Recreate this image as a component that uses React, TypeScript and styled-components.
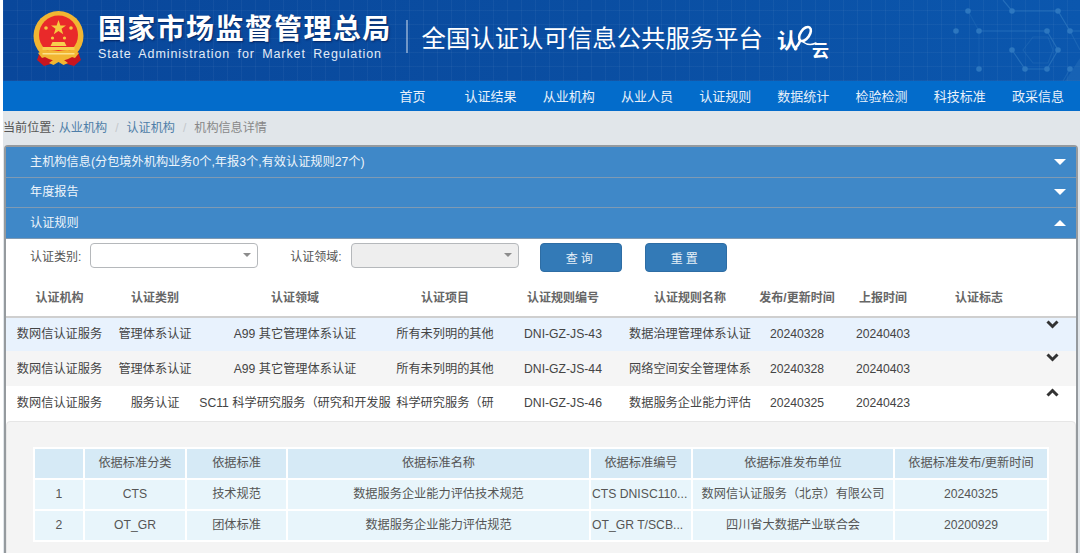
import styled, { createGlobalStyle } from "styled-components";

const GlobalStyle = createGlobalStyle`
  html, body {
    margin: 0;
    padding: 0;
    background: #fff;
    font-family: "Liberation Sans", "Noto Sans CJK SC", sans-serif;
    overflow: hidden;
  }
`;

const Page = styled.div`
  width: 1077px;
  height: 553px;
  margin-left: 3px;
  overflow: hidden;
  background: #e1e6ea;
`;

const Header = styled.header`
  position: relative;
  height: 81px;
  display: flex;
  align-items: center;
  padding-left: 29px;
  box-sizing: border-box;
  overflow: hidden;
  background-color: #0a4c9f;
  background-image: repeating-linear-gradient(90deg, rgba(255, 255, 255, 0.04) 0 1px, transparent 1px 14px),
    repeating-linear-gradient(0deg, rgba(255, 255, 255, 0.04) 0 1px, transparent 1px 14px),
    linear-gradient(90deg, #09479b 0%, #0a4ea2 55%, #0b57ae 100%);
`;

const Emblem = styled.svg`
  width: 54px;
  height: 56px;
  flex: none;
  margin-top: -3px;
`;

const Brand = styled.div`
  margin-left: 12px;
  color: #fff;
  margin-top: -6px;
`;

const BrandCn = styled.div`
  font-size: 28px;
  line-height: 33px;
  font-weight: 700;
  letter-spacing: 1.35px;
  white-space: nowrap;
  text-shadow: 1px 1px 2px rgba(0, 20, 70, 0.7);
`;

const BrandEn = styled.div`
  font-size: 12.5px;
  line-height: 16px;
  letter-spacing: 0.9px;
  word-spacing: 3px;
  white-space: nowrap;
  color: #e3ecf7;
`;

const Divider = styled.div`
  width: 2px;
  height: 33px;
  margin-left: 14px;
  margin-top: -8px;
  background: rgba(255, 255, 255, 0.42);
`;

const Platform = styled.div`
  margin-left: 14px;
  margin-top: -9px;
  font-size: 24.4px;
  color: #fff;
  white-space: nowrap;
`;

const CloudLogo = styled.div`
  position: relative;
  width: 56px;
  height: 42px;
  margin-left: 14px;
  margin-top: 8px;
  flex: none;
  color: #fff;
`;

const LogoChar = styled.span<{ $left: number; $top: number; $size: number }>`
  position: absolute;
  left: ${(p) => p.$left}px;
  top: ${(p) => p.$top}px;
  font-size: ${(p) => p.$size}px;
  line-height: 1;
  font-weight: 700;
`;

const LogoSwirl = styled.svg`
  position: absolute;
  left: 17px;
  top: -4px;
  width: 28px;
  height: 34px;
`;

const Hexagons = styled.svg`
  position: absolute;
  right: 0;
  top: 0;
  width: 127px;
  height: 81px;
  opacity: 0.7;
`;

const Nav = styled.nav`
  height: 30px;
  display: flex;
  justify-content: flex-end;
  padding-right: 3px;
  background: #036ccb;
`;

const NavItem = styled.a`
  width: 78.2px;
  text-align: center;
  font-size: 13px;
  line-height: 32px;
  color: #e9f1fa;
  white-space: nowrap;
`;

const Breadcrumb = styled.div`
  height: 34px;
  display: flex;
  align-items: center;
  box-sizing: border-box;
  font-size: 12.1px;
  line-height: 16px;
  color: #555;
  white-space: nowrap;
`;

const CrumbLabel = styled.span`
  margin-right: 4px;
`;

const CrumbLink = styled.a`
  color: #4f7ea8;
`;

const CrumbSep = styled.span`
  color: #c4c8cc;
  margin: 0 8px;
`;

const CrumbCurrent = styled.span`
  color: #888;
`;

const Panel = styled.section`
  margin: 0 0 0 1px;
  width: 1074px;
  box-sizing: border-box;
  border: 2px solid #959a9e;
  border-bottom: 0;
  border-radius: 4px 4px 0 0;
  background: #fff;
`;

const AccordionHead = styled.div`
  height: 30.5px;
  box-sizing: border-box;
  display: flex;
  align-items: center;
  justify-content: space-between;
  padding: 0 10px 0 24px;
  border-bottom: 1px solid #7f9ab3;
  background: #3f88c8;
  color: #eef5fb;
  font-size: 12.2px;
  line-height: 16px;

  &:last-of-type {
    border-bottom: 0;
  }
`;

const Caret = styled.span<{ $up?: boolean }>`
  width: 0;
  height: 0;
  border-left: 6px solid transparent;
  border-right: 6px solid transparent;
  border-top: ${(p) => (p.$up ? "0" : "6px solid #fff")};
  border-bottom: ${(p) => (p.$up ? "6px solid #fff" : "0")};
`;

const SearchBar = styled.form`
  display: flex;
  align-items: flex-start;
  height: 43px;
  padding: 4px 0 0 24px;
  box-sizing: border-box;
`;

const FieldLabel = styled.label`
  font-size: 12px;
  line-height: 29px;
  color: #555;
  white-space: nowrap;
`;

const SelectBox = styled.div<{ $disabled?: boolean }>`
  position: relative;
  width: 168px;
  height: 25px;
  box-sizing: border-box;
  margin-left: 9px;
  border: 1px solid #b5b8bb;
  border-radius: 4px;
  background: ${(p) => (p.$disabled ? "#eeeeee" : "#fff")};

  &::after {
    content: "";
    position: absolute;
    right: 6px;
    top: 9px;
    border-left: 4px solid transparent;
    border-right: 4px solid transparent;
    border-top: 4px solid #8c8c8c;
  }
`;

const SecondLabel = styled(FieldLabel)`
  margin-left: 32px;
`;

const ActionButton = styled.button<{ $gap: number }>`
  width: 82px;
  height: 29px;
  margin-left: ${(p) => p.$gap}px;
  padding: 0;
  border: 1px solid #2e6da4;
  border-radius: 4px;
  background: #337ab7;
  color: #e6f0f8;
  font-family: inherit;
  font-size: 12px;
  letter-spacing: 3px;
`;

const RuleTable = styled.table`
  width: 1070px;
  border-collapse: collapse;
  table-layout: fixed;
  font-size: 12.2px;
  line-height: 16px;
  color: #444;
`;

const RuleHead = styled.th`
  height: 33px;
  padding: 0 0 1px;
  border-bottom: 2px solid #cfcfcf;
  text-align: center;
  font-weight: 700;
  font-size: 12px;
  color: #666;
  white-space: nowrap;
`;

const RuleRow = styled.tr<{ $bg: string }>`
  height: 34.7px;
  background: ${(p) => p.$bg};
`;

const RuleCell = styled.td`
  padding: 0;
  text-align: center;
  white-space: nowrap;
  overflow: hidden;
`;

const ToggleCell = styled.td`
  padding: 0 0 0 11px;
  vertical-align: top;
`;

const Chevron = styled.svg`
  display: block;
  width: 13px;
  height: 9px;
  margin-top: 2px;
`;

const Detail = styled.div`
  height: 140px;
  box-sizing: border-box;
  padding: 25px 0 0 26px;
  border: 1px solid #e6e6e6;
  border-radius: 4px;
  background: #f4f4f4;
`;

const StandardTable = styled.table`
  width: 1014px;
  border-collapse: collapse;
  table-layout: fixed;
  font-size: 12.2px;
  line-height: 16px;
  color: #555;
`;

const StandardHead = styled.th`
  height: 29px;
  padding: 0;
  border: 2px solid #fff;
  background: #d6eaf6;
  font-weight: 400;
  text-align: center;
  white-space: nowrap;
`;

const StandardCell = styled.td<{ $left?: boolean }>`
  height: 29px;
  padding: ${(p) => (p.$left ? "0 0 0 1px" : "0")};
  border: 2px solid #fff;
  background: #e8f5fb;
  text-align: ${(p) => (p.$left ? "left" : "center")};
  white-space: nowrap;
  overflow: hidden;
`;

const navItems = ["首页", "认证结果", "从业机构", "从业人员", "认证规则", "数据统计", "检验检测", "科技标准", "政采信息"];

const ruleColumns = [107, 84, 196, 104, 132, 122, 92, 80, 112, 41];
const ruleHeads = ["认证机构", "认证类别", "认证领域", "认证项目", "认证规则编号", "认证规则名称", "发布/更新时间", "上报时间", "认证标志", ""];

const rules = [
  { bg: "#e8f2fd", open: false, cells: ["数网信认证服务", "管理体系认证", "A99 其它管理体系认证", "所有未列明的其他", "DNI-GZ-JS-43", "数据治理管理体系认证", "20240328", "20240403", ""] },
  { bg: "#f5f5f5", open: false, cells: ["数网信认证服务", "管理体系认证", "A99 其它管理体系认证", "所有未列明的其他", "DNI-GZ-JS-44", "网络空间安全管理体系", "20240328", "20240403", ""] },
  { bg: "#ffffff", open: true, cells: ["数网信认证服务", "服务认证", "SC11 科学研究服务（研究和开发服", "科学研究服务（研", "DNI-GZ-JS-46", "数据服务企业能力评估", "20240325", "20240423", ""] },
];

const standardColumns = [50, 102, 101, 303, 102, 202, 154];
const standardHeads = ["", "依据标准分类", "依据标准", "依据标准名称", "依据标准编号", "依据标准发布单位", "依据标准发布/更新时间"];

const standards = [
  ["1", "CTS", "技术规范", "数据服务企业能力评估技术规范", "CTS DNISC110...", "数网信认证服务（北京）有限公司", "20240325"],
  ["2", "OT_GR", "团体标准", "数据服务企业能力评估规范", "OT_GR T/SCB...", "四川省大数据产业联合会", "20200929"],
];

function StateEmblem() {
  return (
    <Emblem viewBox="0 0 54 56">
      <path d="M9 38 L5 49 L12 55 L22 52 L27 48 L32 52 L42 55 L49 49 L45 38 Z" fill="#c9151e" />
      <circle cx="26.5" cy="25" r="25" fill="#f2b632" />
      <circle cx="26.5" cy="24" r="19.5" fill="#e9292a" />
      <path d="M26.5 9 l1.9 5.4 5.6 0 -4.5 3.4 1.7 5.5 -4.7-3.3 -4.7 3.3 1.7-5.5 -4.5-3.4 5.6 0 z" fill="#f7c93f" />
      <circle cx="14" cy="17" r="1.8" fill="#f7c93f" />
      <circle cx="39" cy="17" r="1.8" fill="#f7c93f" />
      <circle cx="20.5" cy="27" r="1.6" fill="#f7c93f" />
      <circle cx="32.5" cy="27" r="1.6" fill="#f7c93f" />
      <path d="M18.5 35 L20.5 31 H32.5 L34.5 35 Z" fill="#f7d04e" />
      <path d="M10.5 36 H42.5 V39 H10.5 Z" fill="#f7d04e" />
      <path d="M6 42 Q14 37 26.5 40 Q39 37 47 42 L43 47 Q33 43 26.5 46 Q20 43 10 47 Z" fill="#f2b632" />
      <path d="M10.5 42 H42.5 V43.5 H10.5 Z" fill="#fbe18a" />
      <path d="M17 52 L26.5 45 L36 52 L31.5 54 L26.5 51 L21.5 54 Z" fill="#f2b632" />
    </Emblem>
  );
}

// node positions read off the right end of the banner
const hexNodes = [
  [15, 11], [59, 11], [105, 11], [3, 31], [26, 31], [94, 31], [117, 31],
  [59, 50], [105, 50], [26, 69], [72, 69], [94, 69], [117, 69],
];

function HexagonPattern() {
  return (
    <Hexagons viewBox="0 0 127 81" fill="none" stroke="#2f78c0" strokeWidth="1.2">
      <path d="M50 0 L59 11 L105 11 L117 31 L130 31" />
      <path d="M26 31 L94 31 L105 50 L94 69 L72 69 L59 50" />
      <path d="M15 11 L26 31 L26 69" opacity="0.4" />
      <path d="M70 50 L80 37 L95 37 L100 50 L95 63 L80 63 Z" opacity="0.5" />
      <path d="M117 31 L127 50 M117 69 L110 81" opacity="0.6" />
      {hexNodes.map(([x, y]) => (
        <circle key={`${x}-${y}`} cx={x} cy={y} r="2.8" fill="#3a84c8" stroke="none" />
      ))}
      <path d="M127 58 L127 81 L112 81 Z" fill="#2f78c0" stroke="none" opacity="0.5" />
    </Hexagons>
  );
}

function App() {
  return (
    <>
      <GlobalStyle />
      <Page>
        <Header>
          <StateEmblem />
          <Brand>
            <BrandCn>国家市场监督管理总局</BrandCn>
            <BrandEn>State Administration for Market Regulation</BrandEn>
          </Brand>
          <Divider />
          <Platform>全国认证认可信息公共服务平台</Platform>
          <CloudLogo>
            <LogoChar $left={0} $top={6} $size={21}>认</LogoChar>
            <LogoSwirl viewBox="0 0 28 34" fill="none" stroke="#fff">
              <ellipse cx="11" cy="14" rx="4.5" ry="8" transform="rotate(35 11 14)" strokeWidth="2.6" />
              <path d="M6 21 C5 24 3 27 0 29" strokeWidth="2.4" strokeLinecap="round" />
              <path d="M9 22 C13 25 18 25 22 23" strokeWidth="1.4" strokeLinecap="round" />
            </LogoSwirl>
            <LogoChar $left={35} $top={19} $size={17}>云</LogoChar>
          </CloudLogo>
          <HexagonPattern />
        </Header>
        <Nav>
          {navItems.map((item) => (
            <NavItem key={item}>{item}</NavItem>
          ))}
        </Nav>
        <Breadcrumb>
          <CrumbLabel>当前位置:</CrumbLabel>
          <CrumbLink>从业机构</CrumbLink>
          <CrumbSep>/</CrumbSep>
          <CrumbLink>认证机构</CrumbLink>
          <CrumbSep>/</CrumbSep>
          <CrumbCurrent>机构信息详情</CrumbCurrent>
        </Breadcrumb>
        <Panel>
          <AccordionHead>
            主机构信息(分包境外机构业务0个,年报3个,有效认证规则27个)
            <Caret />
          </AccordionHead>
          <AccordionHead>
            年度报告
            <Caret />
          </AccordionHead>
          <AccordionHead>
            认证规则
            <Caret $up />
          </AccordionHead>
          <SearchBar>
            <FieldLabel>认证类别:</FieldLabel>
            <SelectBox />
            <SecondLabel>认证领域:</SecondLabel>
            <SelectBox $disabled />
            <ActionButton type="button" $gap={21}>查询</ActionButton>
            <ActionButton type="button" $gap={23}>重置</ActionButton>
          </SearchBar>
          <RuleTable>
            <colgroup>
              {ruleColumns.map((w, i) => (
                <col key={i} width={w} />
              ))}
            </colgroup>
            <thead>
              <tr>
                {ruleHeads.map((h, i) => (
                  <RuleHead key={i}>{h}</RuleHead>
                ))}
              </tr>
            </thead>
            <tbody>
              {rules.map((rule) => (
                <RuleRow key={rule.cells[4]} $bg={rule.bg}>
                  {rule.cells.map((c, i) => (
                    <RuleCell key={i}>{c}</RuleCell>
                  ))}
                  <ToggleCell>
                    <Chevron viewBox="0 0 13 9" fill="none" stroke="#333" strokeWidth="3">
                      <polyline points={rule.open ? "1.5,7.5 6.5,2.5 11.5,7.5" : "1.5,1.5 6.5,6.5 11.5,1.5"} />
                    </Chevron>
                  </ToggleCell>
                </RuleRow>
              ))}
            </tbody>
          </RuleTable>
          <Detail>
            <StandardTable>
              <colgroup>
                {standardColumns.map((w, i) => (
                  <col key={i} width={w} />
                ))}
              </colgroup>
              <thead>
                <tr>
                  {standardHeads.map((h, i) => (
                    <StandardHead key={i}>{h}</StandardHead>
                  ))}
                </tr>
              </thead>
              <tbody>
                {standards.map((row) => (
                  <tr key={row[0]}>
                    {row.map((c, i) => (
                      <StandardCell key={i} $left={i === 4}>{c}</StandardCell>
                    ))}
                  </tr>
                ))}
              </tbody>
            </StandardTable>
          </Detail>
        </Panel>
      </Page>
    </>
  );
}

export default App;
